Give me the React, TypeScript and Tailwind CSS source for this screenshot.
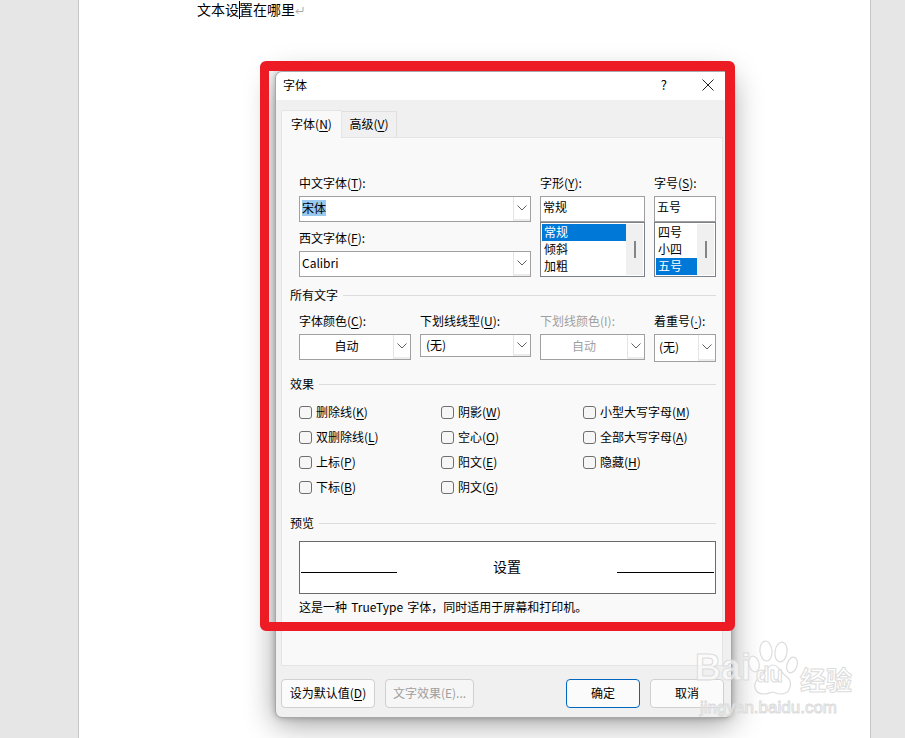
import type { ReactNode } from "react";

function Key({ children }: { children: ReactNode }) {
  return <span className="underline underline-offset-2">{children}</span>;
}

function Chevron({ color = "#606060" }: { color?: string }) {
  return (
    <svg width="10" height="6" viewBox="0 0 10 6" fill="none">
      <polyline points="0.5,0.5 5,5 9.5,0.5" stroke={color} strokeWidth="1" />
    </svg>
  );
}

function Combo({
  children,
  className,
  textClass = "",
}: {
  children: ReactNode;
  className: string;
  textClass?: string;
}) {
  return (
    <div className={`flex border border-[#a0a0a0] bg-white ${className}`}>
      <div className={`flex flex-1 items-center ${textClass}`}>{children}</div>
      <div className="flex w-[17px] items-center justify-center border-l border-[#e4e4e4] border-b-[2px] border-b-[#ececec]">
        <Chevron />
      </div>
    </div>
  );
}

function ListBox({
  items,
  selected,
  width,
  thumbTop,
}: {
  items: string[];
  selected: number;
  width: string;
  thumbTop: string;
}) {
  return (
    <div className={`flex h-[55px] border border-[#7d828a] bg-white p-px ${width}`}>
      <div className="flex-1">
        {items.map((item, i) => (
          <div
            key={item}
            className={`h-[17px] pl-[2px] leading-[15px] ${
              i === selected ? "bg-[#0078d7] text-white" : ""
            }`}
          >
            {item}
          </div>
        ))}
      </div>
      <div className="flex w-[17px] justify-center bg-[#f0f0f0]">
        <div className={`h-[17px] w-[2px] bg-[#858585] ${thumbTop}`} />
      </div>
    </div>
  );
}

function Section({ title, className }: { title: string; className: string }) {
  return (
    <div className={`flex h-4 items-center gap-[5px] pl-[1px] leading-4 ${className}`}>
      <span>{title}</span>
      <div className="h-px flex-1 bg-[#dcdcdc]" />
    </div>
  );
}

function Check({ label, k }: { label: string; k: string }) {
  return (
    <div className="flex h-[25px] items-center gap-1">
      <div className="h-[13px] w-[13px] rounded-[3px] border border-[#6f6f6f] bg-[#f6f6f6]" />
      <span className="pb-[2px]">
        {label}(<Key>{k}</Key>)
      </span>
    </div>
  );
}

function FontDialog() {
  return (
    <div className="absolute left-[275px] top-[71px] flex h-[647px] w-[457px] flex-col rounded-[7px] border border-[#a8a8a8] bg-[#f0f0f0] text-[12px] text-black shadow-[0_0_6px_rgba(0,0,0,0.25),0_6px_30px_rgba(0,0,0,0.38)]">
      {/* title bar */}
      <div className="flex h-[28px] items-center justify-between rounded-t-[7px] bg-white pb-[3px] pl-[7px] pr-[17px]">
        <span>字体</span>
        <div className="flex items-center gap-[35px]">
          <span className="text-[13px]">?</span>
          <svg width="12" height="12" viewBox="0 0 12 12" fill="none">
            <path d="M0.5 0.5 L11.5 11.5 M11.5 0.5 L0.5 11.5" stroke="#222" strokeWidth="1" />
          </svg>
        </div>
      </div>

      {/* tabs */}
      <div className="flex h-[37px] items-end pl-[5px]">
        <div className="z-10 -mb-px flex h-[28px] w-[61px] items-center justify-center rounded-t-[2px] border border-b-0 border-[#e4e4e4] bg-[#f9f9f9] pb-[2px]">
          <span>
            字体(<Key>N</Key>)
          </span>
        </div>
        <div className="flex h-[26px] w-[55px] items-center justify-center border border-b-0 border-l-0 border-[#e0e0e0] bg-[#f0f0f0] pb-[2px]">
          <span>
            高级(<Key>V</Key>)
          </span>
        </div>
      </div>

      {/* panel */}
      <div className="ml-[5px] flex h-[529px] w-[442px] flex-col border border-[#e4e4e4] bg-[#f9f9f9] pl-[7px] pr-[6px] pt-[38px]">
        <div className="flex gap-[9px] pl-[10px]">
          <div className="flex w-[232px] flex-col">
            <div className="h-4 leading-[14px]">
              中文字体(<Key>T</Key>):
            </div>
            <Combo className="mt-1 h-[26px] w-full" textClass="pl-[2px] pb-[3px]">
              <span className="bg-[#99c9ef] leading-[16px]">宋体</span>
            </Combo>
            <div className="mt-[9px] h-4 leading-[14px]">
              西文字体(<Key>F</Key>):
            </div>
            <Combo className="mt-1 h-[26px] w-full" textClass="pl-[2px] pb-[3px]">
              Calibri
            </Combo>
          </div>
          <div className="flex w-[105px] flex-col">
            <div className="h-4 leading-[14px]">
              字形(<Key>Y</Key>):
            </div>
            <div className="mt-1 h-[26px] border border-[#a0a0a0] bg-white pl-[2px] leading-[20px]">
              常规
            </div>
            <ListBox items={["常规", "倾斜", "加粗"]} selected={0} width="w-[105px]" thumbTop="mt-[17px]" />
          </div>
          <div className="flex w-[62px] flex-col">
            <div className="h-4 leading-[14px]">
              字号(<Key>S</Key>):
            </div>
            <div className="mt-1 h-[26px] border border-[#a0a0a0] bg-white pl-[2px] leading-[20px]">
              五号
            </div>
            <ListBox items={["四号", "小四", "五号"]} selected={2} width="w-[62px]" thumbTop="mt-[17px]" />
          </div>
        </div>

        <Section title="所有文字" className="mt-[10px]" />

        <div className="mt-[11px] flex gap-[9px] pl-[10px]">
          <div className="w-[112px]">
            <div className="h-4 leading-[14px]">
              字体颜色(<Key>C</Key>):
            </div>
            <Combo className="mt-1 h-[26px]" textClass="justify-center pb-[2px]">
              自动
            </Combo>
          </div>
          <div className="w-[111px]">
            <div className="h-4 leading-[14px]">
              下划线线型(<Key>U</Key>):
            </div>
            <Combo className="mt-1 h-[23px]" textClass="pl-[5px] pb-[2px]">
              (无)
            </Combo>
          </div>
          <div className="w-[105px] text-[#9f9f9f]">
            <div className="h-4 leading-[14px]">下划线颜色(I):</div>
            <Combo className="mt-1 h-[26px]" textClass="justify-center pb-[2px]">
              自动
            </Combo>
          </div>
          <div className="w-[62px]">
            <div className="h-4 leading-[14px]">
              着重号(<span className="font-[family-name:'Liberation_Sans',sans-serif] underline underline-offset-2">·</span>):
            </div>
            <Combo className="mt-1 h-[28px]" textClass="pl-[4px] pb-[2px]">
              (无)
            </Combo>
          </div>
        </div>

        <Section title="效果" className="mt-[14px]" />

        <div className="ml-[10px] mt-2 grid grid-cols-[142px_142px_1fr]">
          <Check label="删除线" k="K" />
          <Check label="阴影" k="W" />
          <Check label="小型大写字母" k="M" />
          <Check label="双删除线" k="L" />
          <Check label="空心" k="O" />
          <Check label="全部大写字母" k="A" />
          <Check label="上标" k="P" />
          <Check label="阳文" k="E" />
          <Check label="隐藏" k="H" />
          <Check label="下标" k="B" />
          <Check label="阴文" k="G" />
        </div>

        <Section title="预览" className="mt-[15px]" />

        <div className="ml-[10px] mt-[10px] flex h-[53px] items-center justify-between border border-[#6a6a6a] bg-white px-px">
          <div className="mt-[10px] w-[96px] border-b border-black" />
          <span className="pb-[2px] text-[14px]">设置</span>
          <div className="mt-[10px] w-[97px] border-b border-black" />
        </div>
        <div className="ml-[10px] mt-[5px] h-4 leading-[15px] [word-spacing:1.5px]">这是一种 TrueType 字体，同时适用于屏幕和打印机。</div>
      </div>

      {/* footer buttons */}
      <div className="flex justify-between pl-[5px] pr-[7px] pt-[13px]">
        <div className="flex gap-[10px]">
          <div className="flex h-[29px] w-[94px] items-center justify-center rounded-[4px] border border-[#d0d0d0] bg-[#fbfbfb] pb-[2px]">
            <span>
              设为默认值(<Key>D</Key>)
            </span>
          </div>
          <div className="flex h-[29px] w-[89px] items-center justify-center rounded-[4px] border border-[#d0d0d0] bg-[#f6f6f6] pb-[2px] text-[#9f9f9f]">
            文字效果(E)...
          </div>
        </div>
        <div className="flex gap-[10px]">
          <div className="flex h-[29px] w-[74px] items-center justify-center rounded-[4px] border border-[#0067c0] bg-[#fbfbfb] pb-[2px]">
            确定
          </div>
          <div className="flex h-[29px] w-[74px] items-center justify-center rounded-[4px] border border-[#d0d0d0] bg-[#fbfbfb] pb-[2px]">
            取消
          </div>
        </div>
      </div>
    </div>
  );
}

function Watermark() {
  return (
    <div className="pointer-events-none absolute left-[695px] top-[640px] h-[78px] w-[165px] font-[family-name:'Liberation_Sans',sans-serif] text-white/60 [-webkit-text-stroke:1px_#dcdcdc]">
      <span className="absolute left-0 top-[8px] text-[36px] font-bold leading-[40px]">Bai</span>
      <svg className="absolute left-[53px] top-0" width="50" height="56" viewBox="0 0 50 56" fill="#ffffff99" stroke="#dcdcdc" strokeWidth="1.2">
        <ellipse cx="6" cy="24" rx="5" ry="8" transform="rotate(-15 6 24)" />
        <ellipse cx="18" cy="11" rx="6" ry="10" transform="rotate(-5 18 11)" />
        <ellipse cx="33" cy="12" rx="6" ry="10" transform="rotate(8 33 12)" />
        <ellipse cx="44" cy="25" rx="5" ry="8" transform="rotate(18 44 25)" />
        <path d="M25 25 C31 25 33 33 39 37 C45 42 43 54 33 54 C28 54 27 52 25 52 C23 52 21 54 16 54 C6 54 4 44 11 38 C18 33 19 25 25 25 Z" />
      </svg>
      <span className="absolute left-[61px] top-[22px] text-[22px] font-bold leading-[26px]">du</span>
      <span className="absolute left-[105px] top-[24px] font-[family-name:'Noto_Sans_CJK_SC',sans-serif] text-[26px] font-bold leading-[30px]">经验</span>
      <span className="absolute left-[5px] top-[58px] text-[17px] leading-5">jingyan.baidu.com</span>
    </div>
  );
}

export default function App() {
  return (
    <div className="relative h-[738px] w-[905px] overflow-hidden bg-[#e6e6e6] font-[family-name:'Noto_Sans_CJK_SC','Liberation_Sans',sans-serif]">
      {/* document page */}
      <div className="ml-[78px] h-full w-[793px] border-x border-[#c6c6c6] bg-white pl-[118px]">
        <div className="flex items-center text-[14px] leading-[18px] text-black">
          <span className="relative">
            文本设置在哪里
            <span className="absolute left-[42px] top-px h-[18px] w-px bg-black" />
          </span>
          <svg width="9" height="9" viewBox="0 0 9 9" fill="none" className="mt-[2px]">
            <path d="M8 1 V5.5 H1 M3.5 3 L1 5.5 L3.5 8" stroke="#a8a8a8" strokeWidth="1" />
          </svg>
        </div>
      </div>

      <FontDialog />

      {/* red highlight frame */}
      <div className="pointer-events-none absolute left-[260px] top-[61px] h-[570px] w-[475px] rounded-[6px] border-[10px] border-b-[9px] border-l-[9px] border-[#ed1c24]" />

      <Watermark />
    </div>
  );
}
